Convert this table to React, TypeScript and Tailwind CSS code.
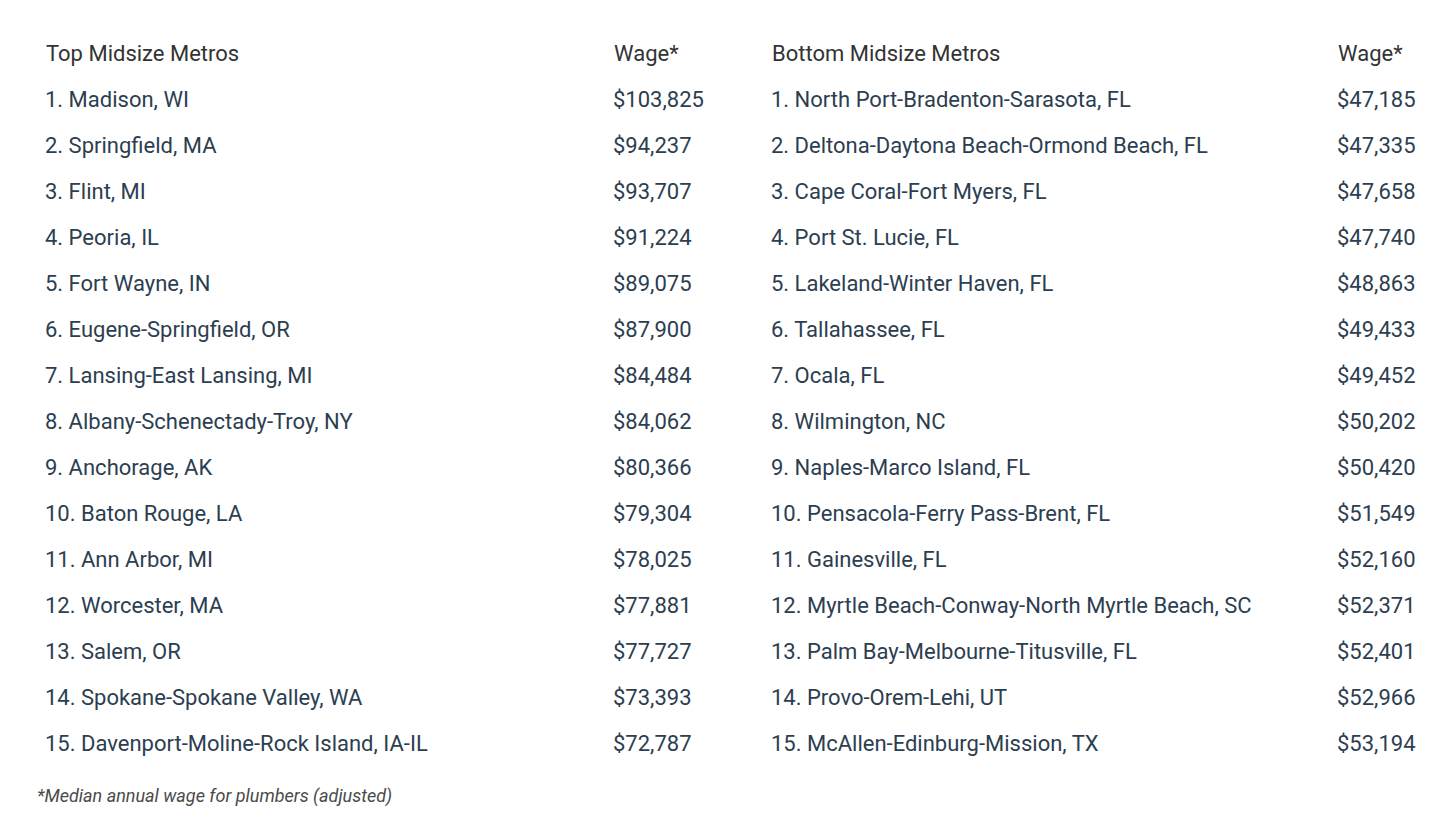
const TOP = [
  ["1. Madison, WI", "$103,825"],
  ["2. Springfield, MA", "$94,237"],
  ["3. Flint, MI", "$93,707"],
  ["4. Peoria, IL", "$91,224"],
  ["5. Fort Wayne, IN", "$89,075"],
  ["6. Eugene-Springfield, OR", "$87,900"],
  ["7. Lansing-East Lansing, MI", "$84,484"],
  ["8. Albany-Schenectady-Troy, NY", "$84,062"],
  ["9. Anchorage, AK", "$80,366"],
  ["10. Baton Rouge, LA", "$79,304"],
  ["11. Ann Arbor, MI", "$78,025"],
  ["12. Worcester, MA", "$77,881"],
  ["13. Salem, OR", "$77,727"],
  ["14. Spokane-Spokane Valley, WA", "$73,393"],
  ["15. Davenport-Moline-Rock Island, IA-IL", "$72,787"],
];

const BOTTOM = [
  ["1. North Port-Bradenton-Sarasota, FL", "$47,185"],
  ["2. Deltona-Daytona Beach-Ormond Beach, FL", "$47,335"],
  ["3. Cape Coral-Fort Myers, FL", "$47,658"],
  ["4. Port St. Lucie, FL", "$47,740"],
  ["5. Lakeland-Winter Haven, FL", "$48,863"],
  ["6. Tallahassee, FL", "$49,433"],
  ["7. Ocala, FL", "$49,452"],
  ["8. Wilmington, NC", "$50,202"],
  ["9. Naples-Marco Island, FL", "$50,420"],
  ["10. Pensacola-Ferry Pass-Brent, FL", "$51,549"],
  ["11. Gainesville, FL", "$52,160"],
  ["12. Myrtle Beach-Conway-North Myrtle Beach, SC", "$52,371"],
  ["13. Palm Bay-Melbourne-Titusville, FL", "$52,401"],
  ["14. Provo-Orem-Lehi, UT", "$52,966"],
  ["15. McAllen-Edinburg-Mission, TX", "$53,194"],
];

export default function App() {
  return (
    <div className="w-[1450px] h-[825px] bg-white pt-[31px] pl-[35px] font-['Roboto',sans-serif]">
      <div className="grid grid-cols-[568px_158px_566px_110px] text-[22px] leading-[46px]">
        <div className="pl-[11px] text-[#333333]">Top Midsize Metros</div>
        <div className="pl-[11px] text-[#333333]">Wage*</div>
        <div className="pl-[11px] text-[#333333]">Bottom Midsize Metros</div>
        <div className="pl-[11px] text-[#333333]">Wage*</div>
        {TOP.map((row, i) => (
          <div key={i} className="contents text-[#2c3e50]">
            <div className="pl-[10px] whitespace-nowrap">{row[0]}</div>
            <div className="pl-[10px]">{row[1]}</div>
            <div className="pl-[10px] whitespace-nowrap">{BOTTOM[i][0]}</div>
            <div className="pl-[10px]">{BOTTOM[i][1]}</div>
          </div>
        ))}
      </div>
      <p className="mt-[17px] pl-[2px] text-[18px] leading-[24px] italic text-[#4a4a4a]">
        *Median annual wage for plumbers (adjusted)
      </p>
    </div>
  );
}
